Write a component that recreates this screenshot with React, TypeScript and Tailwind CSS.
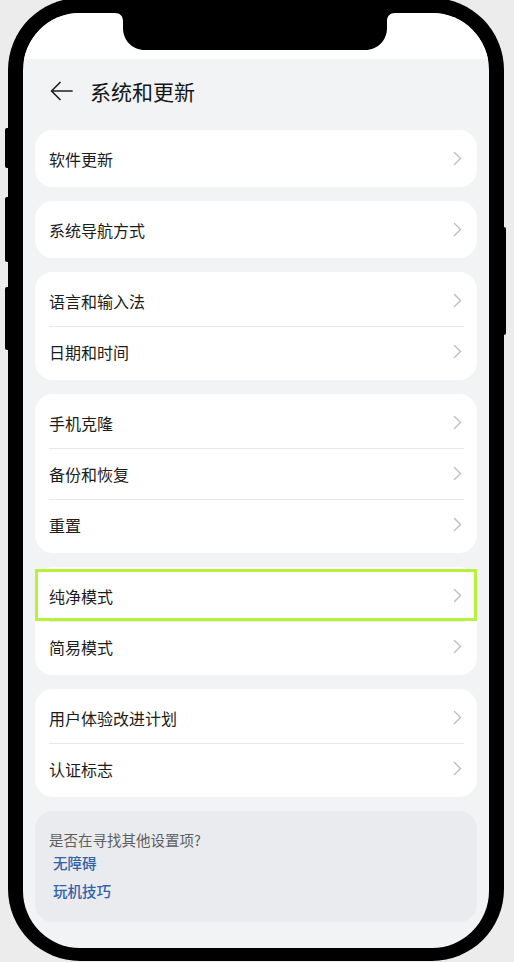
import React from 'react'

type Row = { label: string; highlight?: boolean }

const groups: Row[][] = [
  [{ label: '软件更新' }],
  [{ label: '系统导航方式' }],
  [{ label: '语言和输入法' }, { label: '日期和时间' }],
  [{ label: '手机克隆' }, { label: '备份和恢复' }, { label: '重置' }],
  [{ label: '纯净模式', highlight: true }, { label: '简易模式' }],
  [{ label: '用户体验改进计划' }, { label: '认证标志' }],
]

const font = { fontFamily: '"Noto Sans CJK SC", "Noto Sans", sans-serif' }

function Chevron() {
  return (
    <svg width="9" height="15" viewBox="0 0 9 15" fill="none">
      <polyline points="1.5,1.5 7.5,7.5 1.5,13.5" stroke="#bdbdbd" strokeWidth="1.4" strokeLinecap="round" strokeLinejoin="round" />
    </svg>
  )
}

function BackArrow() {
  return (
    <svg width="23" height="20" viewBox="0 0 23 20" fill="none">
      <path d="M22 10H2M10 1.5L1.5 10L10 18.5" stroke="#222" strokeWidth="1.7" strokeLinecap="round" strokeLinejoin="round" />
    </svg>
  )
}

function Notch() {
  return (
    <svg className="absolute left-[92px] top-0" width="280" height="37" viewBox="0 0 280 37">
      <path d="M0,0 C5,0 8,3 8,8 L8,15 C8,27 17,37 30,37 L250,37 C263,37 272,27 272,15 L272,8 C272,3 275,0 280,0 Z" fill="#000" />
    </svg>
  )
}

export default function App() {
  return (
    <div className="w-[514px] h-[962px] bg-[#ececec] overflow-hidden" style={font}>
      <div className="relative ml-[8px] mt-[-2px] w-[496px] h-[963px] bg-black rounded-[72px] pl-[15px] pr-[15px] pt-[15px] pb-[13px]">
        {/* side buttons */}
        <div className="absolute left-[-3px] top-[130px] w-[4px] h-[40px] bg-black rounded-l-[2px]" />
        <div className="absolute left-[-3px] top-[199px] w-[4px] h-[65px] bg-black rounded-l-[2px]" />
        <div className="absolute left-[-3px] top-[289px] w-[4px] h-[63px] bg-black rounded-l-[2px]" />
        <div className="absolute right-[-2px] top-[229px] w-[4px] h-[108px] bg-black rounded-r-[2px]" />

        <div className="relative w-full h-full bg-[#f1f3f5] rounded-[57px] overflow-hidden flex flex-col">
          <div className="h-[46px] bg-white shrink-0" />
          <Notch />

          <div className="h-[71px] flex items-center pl-[27px] pb-[8px] shrink-0">
            <BackArrow />
            <span className="ml-[17px] text-[21px] leading-[28px] text-[#161616]">系统和更新</span>
          </div>

          <div className="px-[12px] flex flex-col gap-[14px]">
            {groups.map((rows, gi) => (
              <div key={gi} className="relative bg-white rounded-[18px] py-[3px]">
                {rows.map((row, ri) => (
                  <div key={row.label} className="relative">
                    {ri > 0 && <div className="absolute top-0 left-[14px] right-[13px] h-px bg-[#e8e8e8]" />}
                    <div className="h-[51px] flex items-center justify-between pl-[14px] pr-[15px]">
                      <span className="text-[16px] leading-[22px] text-[#1c1c1c]">{row.label}</span>
                      <Chevron />
                    </div>
                    {row.highlight && (
                      <div className="absolute left-0 right-0 top-[-1px] h-[52px] border-[3px] border-[#b6f23a]" />
                    )}
                  </div>
                ))}
              </div>
            ))}

            <div className="bg-[#e9ebee] rounded-[18px] h-[111px] pl-[14px] pt-[19px]">
              <p className="text-[14.5px] leading-[20px] text-[#5f5f5f]">是否在寻找其他设置项?</p>
              <p className="mt-[3px] pl-[4px] text-[14.5px] leading-[20px] font-medium text-[#2f62aa]">无障碍</p>
              <p className="mt-[8px] pl-[4px] text-[14.5px] leading-[20px] font-medium text-[#2f62aa]">玩机技巧</p>
            </div>
          </div>
        </div>
      </div>
    </div>
  )
}
